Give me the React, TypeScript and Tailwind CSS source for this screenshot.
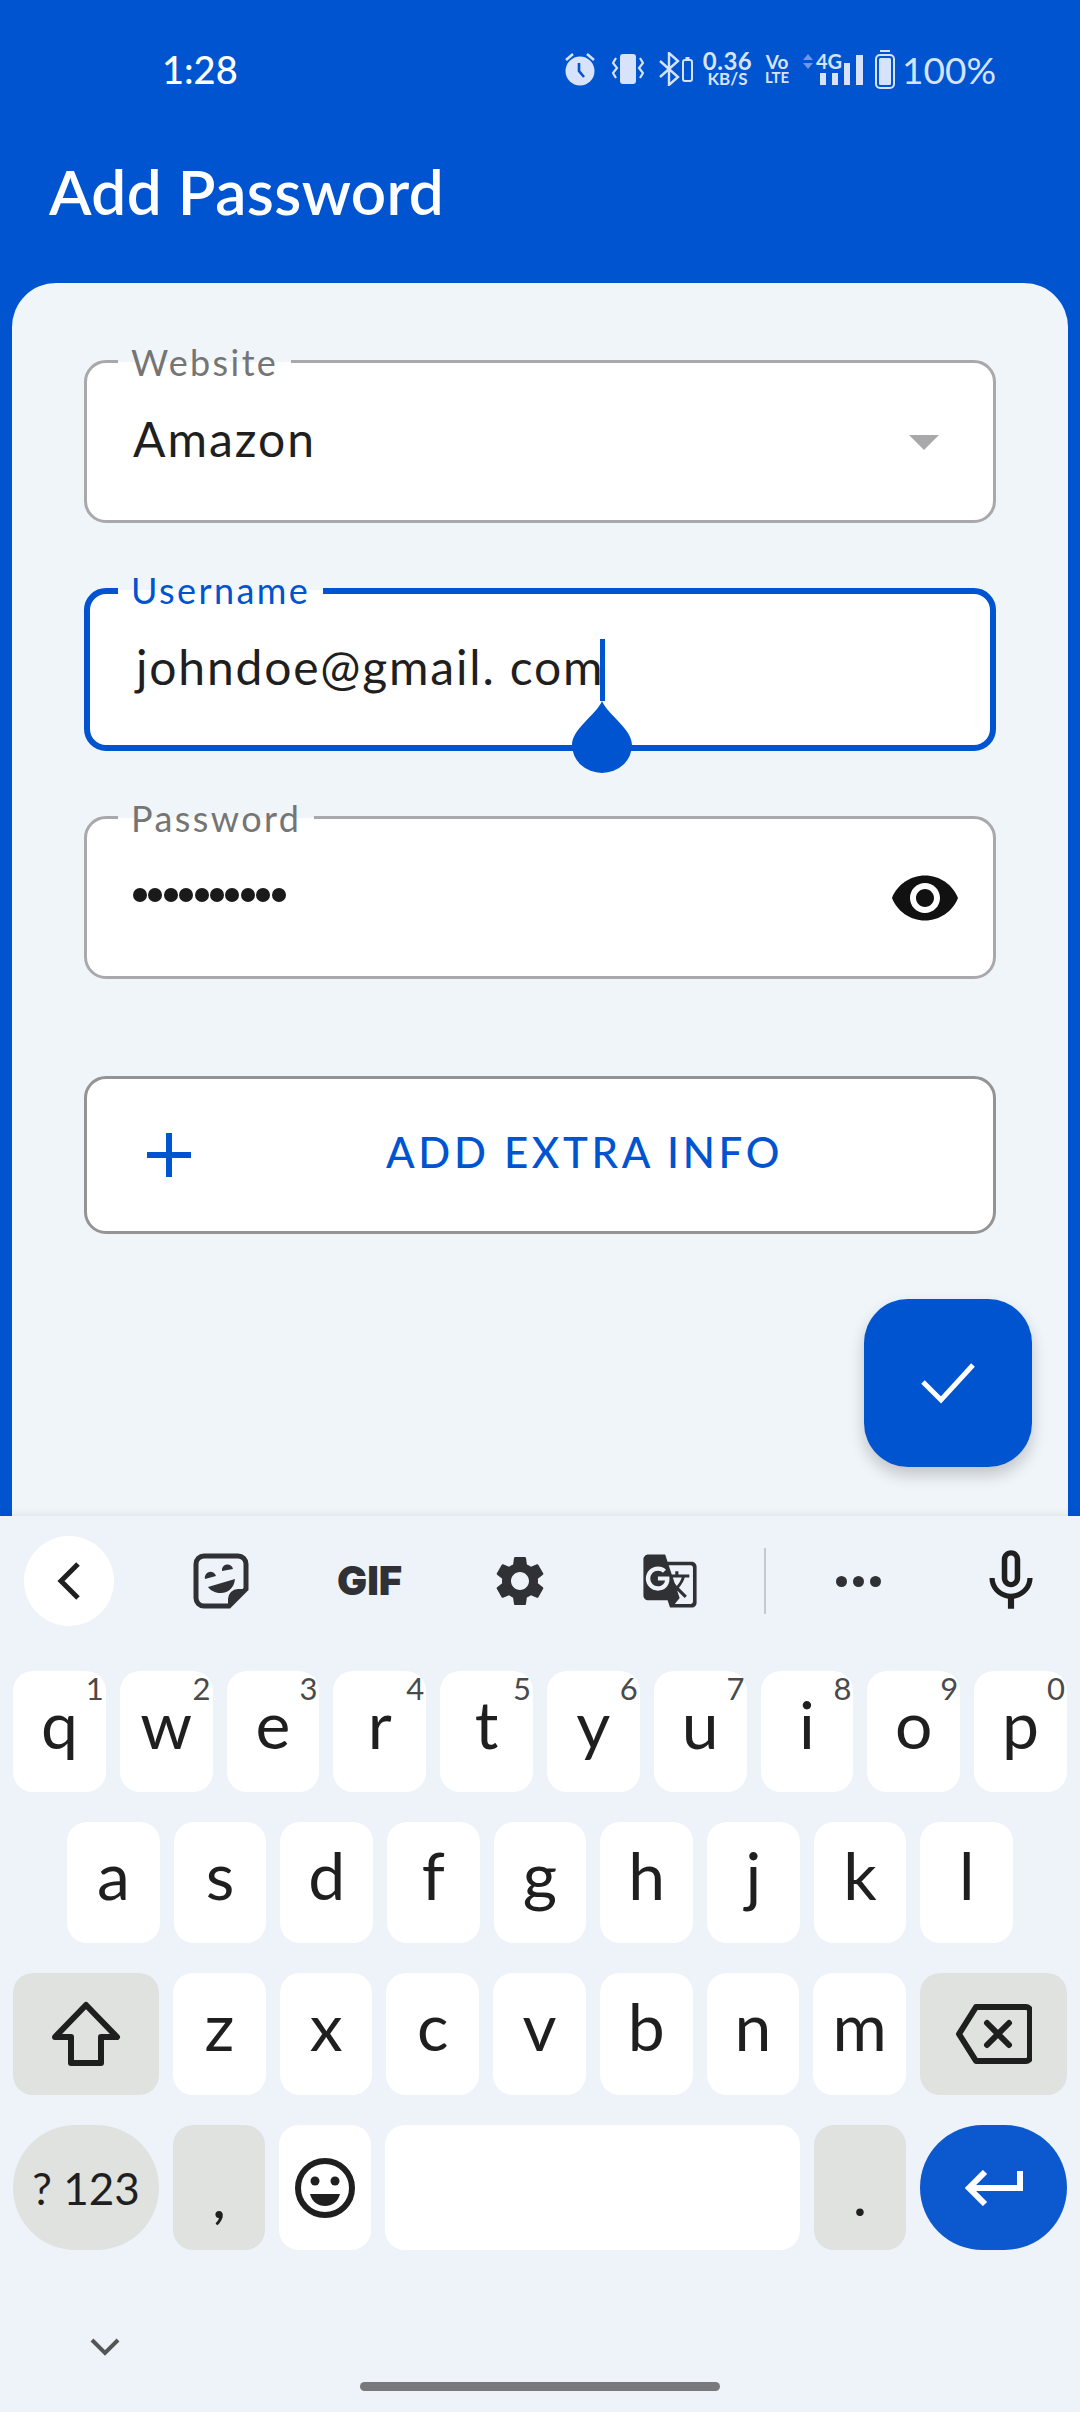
import { MdGTranslate, MdMicNone, MdSettings, MdVisibility } from "react-icons/md";

const rowOne = [
  ["q", "1"],
  ["w", "2"],
  ["e", "3"],
  ["r", "4"],
  ["t", "5"],
  ["y", "6"],
  ["u", "7"],
  ["i", "8"],
  ["o", "9"],
  ["p", "0"],
];
const rowTwo = ["a", "s", "d", "f", "g", "h", "j", "k", "l"];
const rowThree = ["z", "x", "c", "v", "b", "n", "m"];

const Letter = ({ label, hint }: { label: string; hint?: string }) => (
  <div className="relative flex h-full flex-1 items-center justify-center rounded-[20px] bg-white pb-[16px] text-[66px] leading-none text-[#1f1f1f]">
    {label}
    {hint && (
      <span className="absolute top-[2px] right-[2px] text-[31px] leading-[30px] text-[#4a4a4a]">
        {hint}
      </span>
    )}
  </div>
);

const StatusBar = () => (
  <div className="flex h-[138px] shrink-0 items-center pl-[162px] text-[#d6e3fa]">
    <span className="w-[402px] text-[38px] leading-none font-medium text-white">1:28</span>
    <svg width="32" height="34" viewBox="0 0 32 34">
      <circle cx="16" cy="19" r="14.5" fill="#d6e3fa" />
      <path d="M2 8 9 2M30 8 23 2" stroke="#d6e3fa" strokeWidth="2.6" fill="none" />
      <path d="M15 11v8l5 6" stroke="#0054d0" strokeWidth="2.6" fill="none" />
    </svg>
    <svg className="ml-[16px]" width="32" height="30" viewBox="0 0 32 30">
      <rect x="8" y="0" width="16" height="30" rx="3" fill="#d6e3fa" />
      <path
        d="M4 4 1 9l4 5-4 5 3 5M28 4l3 5-4 5 4 5-3 5"
        stroke="#d6e3fa"
        strokeWidth="2.2"
        fill="none"
      />
    </svg>
    <svg className="ml-[15px]" width="34" height="34" viewBox="0 0 34 34">
      <path d="M1 9l18 16-9 8V1l9 8L1 25" stroke="#d6e3fa" strokeWidth="2.4" fill="none" />
      <rect x="24" y="8" width="9" height="21" rx="2" stroke="#d6e3fa" strokeWidth="2" fill="none" />
      <rect x="26.5" y="5" width="4" height="3" fill="#d6e3fa" />
    </svg>
    <div className="ml-[10px] flex w-[49px] flex-col items-center font-bold">
      <span className="text-[24px] leading-[20px] tracking-[0.5px]">0.36</span>
      <span className="text-[17px] leading-[16px]">KB/S</span>
    </div>
    <div className="ml-[14px] flex w-[22px] flex-col items-center font-bold">
      <span className="text-[19px] leading-[16px]">Vo</span>
      <span className="text-[15px] leading-[14px]">LTE</span>
    </div>
    <div className="relative ml-[15px] h-[32px] w-[60px]">
      <svg width="60" height="32" viewBox="0 0 60 32">
        <path d="M0 7 5 1l5 6zM0 10l5 6 5-6z" fill="#6f97e2" />
        <rect x="17" y="20" width="6" height="12" fill="#d6e3fa" />
        <rect x="29" y="20" width="6" height="12" fill="#d6e3fa" />
        <rect x="41" y="10" width="6" height="22" fill="#d6e3fa" />
        <rect x="53" y="2" width="7" height="30" fill="#d6e3fa" />
      </svg>
      <span className="absolute top-[-2px] left-[13px] text-[20px] leading-[20px] font-bold">4G</span>
    </div>
    <svg className="ml-[12px]" width="20" height="39" viewBox="0 0 20 39">
      <rect x="5" y="0" width="10" height="2" fill="#d6e3fa" />
      <rect x="1" y="5" width="18" height="33" rx="4" stroke="#d6e3fa" strokeWidth="2" fill="none" />
      <rect x="4" y="8" width="12" height="27" rx="1.5" fill="#d6e3fa" />
    </svg>
    <span className="ml-[7px] text-[37px] leading-none">100%</span>
  </div>
);

const Field = ({
  label,
  focused,
  children,
}: {
  label: string;
  focused?: boolean;
  children: React.ReactNode;
}) => (
  <div
    className={`relative flex h-[163px] items-center rounded-[22px] bg-white pr-[36px] ${
      focused
        ? "border-[6px] border-[#0054d0] pl-[46px]"
        : "border-[3px] border-[#a9a9ab] pl-[46px]"
    }`}
  >
    <span
      className={`absolute bg-[linear-gradient(#f0f5fa_50%,#ffffff_50%)] px-[13px] text-[36px] leading-[24px] tracking-[2.400px] ${
        focused
          ? "top-[-16px] left-[28px] text-[#0054d0]"
          : "top-[-13px] left-[31px] text-[#757575]"
      }`}
    >
      {label}
    </span>
    {children}
  </div>
);

const Toolbar = () => (
  <div className="flex h-[90px] items-center pl-[24px] text-[#303134]">
    <div className="flex h-[90px] w-[90px] items-center justify-center rounded-full bg-white">
      <svg width="24" height="38" viewBox="0 0 24 38">
        <path d="M21 2 4 19l17 17" stroke="#1f1f1f" strokeWidth="5" fill="none" />
      </svg>
    </div>
    <svg className="ml-[79px]" width="56" height="56" viewBox="0 0 56 56">
      <path
        d="M11 3h34a8 8 0 0 1 8 8v25L36 53H11a8 8 0 0 1-8-8V11a8 8 0 0 1 8-8z"
        stroke="#303134"
        strokeWidth="5"
        fill="none"
      />
      <path d="M53 36H45a10 10 0 0 0-10 10v7z" fill="#303134" />
      <path d="M12 26a5.500 5.500 0 0 1 11-3zM29 18a5.500 5.500 0 0 1 11-2zM15 34l27-8c-1 10-8 14-14 14-5 0-10-2-13-6z" fill="#303134" />
    </svg>
    <span className="ml-[88px] w-[68px] font-['Inter',sans-serif] text-[40px] leading-none font-black">GIF</span>
    <MdSettings className="ml-[85px]" size={60} />
    <MdGTranslate className="ml-[91px]" size={58} />
    <div className="ml-[65px] h-[66px] w-[2px] bg-[#c5c9cf]" />
    <div className="ml-[70px] flex gap-[6px]">
      <span className="h-[11px] w-[11px] rounded-full bg-[#303134]" />
      <span className="h-[11px] w-[11px] rounded-full bg-[#303134]" />
      <span className="h-[11px] w-[11px] rounded-full bg-[#303134]" />
    </div>
    <MdMicNone className="ml-[93px]" size={74} color="#1f1f1f" />
  </div>
);

const Keyboard = () => (
  <div className="h-[896px] shrink-0 bg-[#eef3fa] pt-[20px] shadow-[0_-3px_6px_rgba(0,0,0,0.06)]">
    <Toolbar />
    <div className="mt-[45px] flex h-[121px] gap-[14px] px-[13px]">
      {rowOne.map(([key, hint]) => (
        <Letter key={key} label={key} hint={hint} />
      ))}
    </div>
    <div className="mt-[30px] flex h-[121px] gap-[14px] px-[67px]">
      {rowTwo.map((key) => (
        <Letter key={key} label={key} />
      ))}
    </div>
    <div className="mt-[30px] flex h-[122px] gap-[14px] px-[13px]">
      <div className="flex w-[146px] shrink-0 items-center justify-center rounded-[20px] bg-[#e0e2e0]">
        <svg width="70" height="66" viewBox="0 0 70 66">
          <path
            d="M35 4 66 36H50v26H20V36H4z"
            stroke="#1f1f1f"
            strokeWidth="6"
            strokeLinejoin="round"
            fill="none"
          />
        </svg>
      </div>
      {rowThree.map((key) => (
        <Letter key={key} label={key} />
      ))}
      <div className="flex w-[147px] shrink-0 items-center justify-center rounded-[20px] bg-[#e0e2e0]">
        <svg width="76" height="60" viewBox="0 0 76 60">
          <path
            d="M20 3h50a4 4 0 0 1 4 4v46a4 4 0 0 1-4 4H20L3 30z"
            stroke="#1f1f1f"
            strokeWidth="6"
            strokeLinejoin="round"
            fill="none"
          />
          <path d="M31 19l22 22M53 19 31 41" stroke="#1f1f1f" strokeWidth="6" strokeLinecap="round" />
        </svg>
      </div>
    </div>
    <div className="mt-[30px] flex h-[125px] gap-[14px] px-[13px]">
      <div className="flex w-[146px] shrink-0 items-center justify-center rounded-full bg-[#e0e2e0] text-[44px] leading-none text-[#1f1f1f]">
        ? 123
      </div>
      <div className="flex w-[92px] shrink-0 items-end justify-center rounded-[20px] bg-[#e0e2e0] pb-[26px] text-[50px] leading-[50px] font-bold text-[#1f1f1f]">
        ,
      </div>
      <div className="flex w-[92px] shrink-0 items-center justify-center rounded-[20px] bg-white">
        <svg width="60" height="60" viewBox="0 0 60 60">
          <circle cx="30" cy="30" r="27" stroke="#1f1f1f" strokeWidth="6" fill="none" />
          <circle cx="20" cy="23" r="4.500" fill="#1f1f1f" />
          <circle cx="40" cy="23" r="4.500" fill="#1f1f1f" />
          <path d="M15 36h30c-2 8-8 12-15 12s-13-4-15-12z" fill="#1f1f1f" />
        </svg>
      </div>
      <div className="flex-1 rounded-[20px] bg-white" />
      <div className="flex w-[92px] shrink-0 items-end justify-center rounded-[20px] bg-[#e0e2e0] pb-[28px] text-[50px] leading-[50px] font-bold text-[#1f1f1f]">
        .
      </div>
      <div className="flex w-[147px] shrink-0 items-center justify-center rounded-full bg-[#0c59cf]">
        <svg width="58" height="36" viewBox="0 0 58 36">
          <path d="M55 1v17H5M20 2 4 18l16 16" stroke="#ffffff" strokeWidth="6" fill="none" />
        </svg>
      </div>
    </div>
    <svg className="mt-[88px] ml-[90px]" width="30" height="18" viewBox="0 0 30 18">
      <path d="M2 2 15 15 28 2" stroke="#555555" strokeWidth="4" fill="none" />
    </svg>
    <div className="mx-auto mt-[26px] h-[9px] w-[360px] rounded-full bg-[#77797d]" />
  </div>
);

export default function App() {
  return (
    <div className="flex h-[2412px] w-[1080px] flex-col overflow-hidden bg-[#0054d0] font-['Lato',sans-serif]">
      <StatusBar />
      <h1 className="h-[145px] shrink-0 pt-[13px] pl-[49px] text-[62px] leading-[80px] font-semibold tracking-[0.4px] text-white">
        Add Password
      </h1>
      <div className="mx-[12px] flex h-[1233px] shrink-0 flex-col gap-[65px] rounded-t-[44px] bg-[#f0f5fa] px-[72px] pt-[77px]">
        <Field label="Website">
          <span className="mb-[6px] flex-1 text-[48px] tracking-[2px] text-[#1f1f1f]">Amazon</span>
          <svg className="mt-[2px] mr-[18px]" width="30" height="15" viewBox="0 0 30 15">
            <path d="M0 0h30L15 15z" fill="#a9a9ab" />
          </svg>
        </Field>
        <Field label="Username" focused>
          <span className="mb-[6px] text-[48px] tracking-[1.800px] text-[#1f1f1f]">johndoe@gmail. com</span>
          <div className="absolute top-[45px] left-[510px] h-[62px] w-[5px] bg-[#0054d0]" />
          <svg
            className="absolute top-[107px] left-[482px]"
            width="60"
            height="72"
            viewBox="0 0 60 72"
          >
            <path d="M30 0c6 14 30 28 30 44a30 28 0 0 1-60 0C0 28 24 14 30 0z" fill="#0054d0" />
          </svg>
        </Field>
        <Field label="Password">
          <div className="mb-[6px] flex flex-1 gap-[1.400px]">
            {Array.from({ length: 10 }).map((_, i) => (
              <span key={i} className="h-[14px] w-[14px] rounded-full bg-[#1a1a1a]" />
            ))}
          </div>
          <MdVisibility className="mr-[-4px]" size={72} color="#111111" />
        </Field>
        <div className="mt-[32px] flex h-[158px] items-center rounded-[22px] border-[3px] border-[#949494] bg-white pl-[60px] text-[#0054d0]">
          <svg width="44" height="44" viewBox="0 0 44 44">
            <path d="M22 0v44M0 22h44" stroke="#0054d0" strokeWidth="6" />
          </svg>
          <span className="mb-[6px] ml-[195px] text-[42px] leading-none font-medium tracking-[3.700px]">ADD EXTRA INFO</span>
        </div>
        <div className="mr-[-36px] flex h-[168px] w-[168px] items-center justify-center self-end rounded-[44px] bg-[#0054d0] shadow-[0_8px_16px_rgba(0,0,0,0.2)]">
          <svg width="54" height="42" viewBox="0 0 54 42">
            <path d="M2 20 20 38 52 3" stroke="#ffffff" strokeWidth="5" fill="none" />
          </svg>
        </div>
      </div>
      <Keyboard />
    </div>
  );
}
